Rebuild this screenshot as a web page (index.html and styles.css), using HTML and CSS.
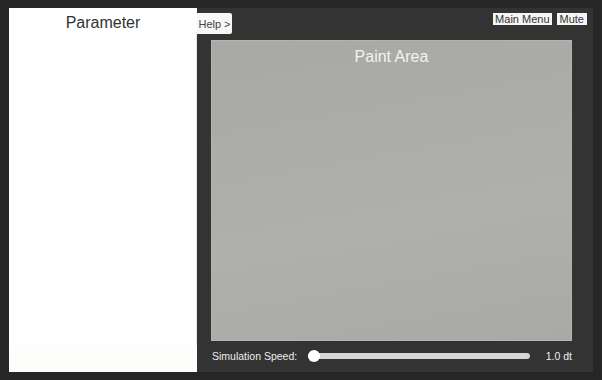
FILE: index.html
```html
<!DOCTYPE html>
<html lang="en">
<head>
    <meta charset="UTF-8">
    <meta name="viewport" content="width=device-width, initial-scale=1.0">
    <title>Paint Simulation</title>
    <link rel="stylesheet" href="styles.css">
</head>
<body>
    <div class="app">
        <!-- Parameter side panel -->
        <div class="panel">
            <h2 class="panel-title">Parameter</h2>
            <div class="panel-body"></div>
            <div class="panel-foot"></div>
        </div>

        <div class="main">
            <div class="topbar">
                <button class="help-btn">Help &gt;</button>
                <div class="menu-btns">
                    <button class="small-btn menu-btn">Main Menu</button>
                    <button class="small-btn">Mute</button>
                </div>
            </div>

            <div class="paint-area">
                <div class="paint-title">Paint Area</div>
            </div>

            <div class="speed-row">
                <span class="speed-label">Simulation Speed:</span>
                <div class="slider">
                    <div class="slider-thumb"></div>
                </div>
                <span class="speed-value">1.0 dt</span>
            </div>
        </div>
    </div>
</body>
</html>
```

FILE: styles.css
```css
body {
    margin: 0;
    background-color: #262626;
    font-family: "Liberation Sans", Arial, sans-serif;
}
.app {
    display: flex;
    width: 584px;
    height: 364px;
    margin: 8px 0 0 9px;
    background-color: #333333;
}
.panel {
    width: 188px;
    display: flex;
    flex-direction: column;
    background-color: #ffffff;
}
.panel-title {
    margin: 0;
    padding-top: 6px;
    font-size: 16px;
    font-weight: normal;
    line-height: 18px;
    text-align: center;
    color: #333333;
}
.panel-body {
    flex: 1;
    border-right: 1px solid #e4e4e4;
}
.panel-foot {
    height: 27px;
    background-color: #fdfdfb;
}
.main {
    flex: 1;
    display: flex;
    flex-direction: column;
    padding: 5px 6px 0 0;
}
.topbar {
    display: flex;
    justify-content: space-between;
    align-items: flex-start;
    height: 21px;
}
.help-btn {
    width: 35px;
    height: 21px;
    padding: 0;
    border: none;
    border-radius: 0 2px 2px 0;
    background-color: #f7f7f7;
    color: #444444;
    font-family: inherit;
    font-size: 11px;
}
.menu-btns {
    display: flex;
    gap: 5px;
}
.small-btn {
    height: 12px;
    padding: 0 3px;
    border: none;
    background-color: #f5f5f5;
    color: #333333;
    font-family: inherit;
    font-size: 11px;
    line-height: 12px;
}
.menu-btn {
    padding: 0 2px;
}
.paint-area {
    width: 361px;
    height: 301px;
    margin: 6px 0 0 14px;
    box-sizing: border-box;
    border: 1px solid #b4b4b0;
    background: linear-gradient(170deg, #a8a8a4 0%, #afafab 60%, #a9a9a5 100%);
}
.paint-title {
    padding-top: 7px;
    font-size: 16px;
    line-height: 18px;
    text-align: center;
    color: #f2f2f2;
}
.speed-row {
    flex: 1;
    display: flex;
    align-items: center;
    padding: 0 15px 2px 15px;
    color: #eeeeee;
    font-size: 10.5px;
}
.speed-label {
    width: 96px;
}
.slider {
    position: relative;
    width: 222px;
    height: 6px;
    border-radius: 3px;
    background-color: #d6d6d6;
}
.slider-thumb {
    position: absolute;
    left: 0;
    top: -3px;
    width: 12px;
    height: 12px;
    border-radius: 50%;
    background-color: #ffffff;
}
.speed-value {
    flex: 1;
    text-align: right;
}
```
